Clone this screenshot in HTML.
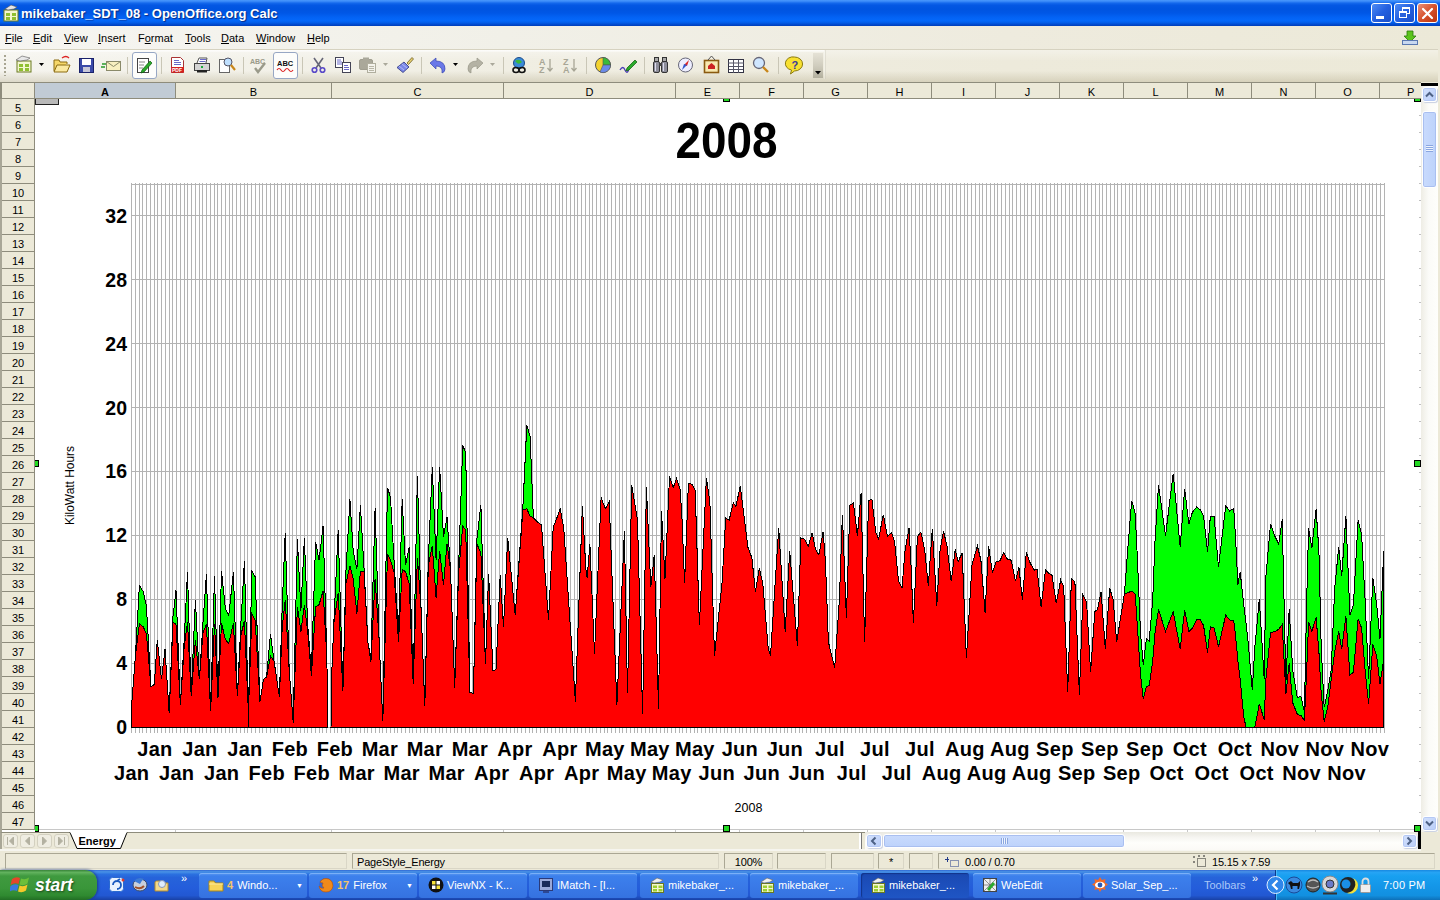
<!DOCTYPE html><html><head><meta charset="utf-8"><title>mikebaker_SDT_08 - OpenOffice.org Calc</title><style>
*{box-sizing:border-box;margin:0;padding:0}
html,body{width:1440px;height:900px;overflow:hidden;background:#ece9d8;font-family:"Liberation Sans",sans-serif;font-size:11px;color:#000}
.abs{position:absolute}
#title{left:0;top:0;width:1440px;height:26px;background:linear-gradient(to bottom,#4a98fc 0%,#3a8af8 5%,#1468ec 12%,#0457e3 20%,#0054e0 35%,#0057e6 50%,#0362f4 66%,#0468fa 80%,#035ce6 88%,#0148cc 95%,#003eb8 100%)}
#title .t{left:21px;top:6px;color:#fff;font-weight:bold;font-size:13px;white-space:nowrap;text-shadow:1px 1px 1px #0a2a80;letter-spacing:0px}
.wb{top:3px;width:21px;height:20px;border:1px solid #fff;border-radius:3px;background:linear-gradient(135deg,#4f8cf5 0%,#2460e0 50%,#1a4fc8 100%)}
#menu{left:0;top:26px;width:1440px;height:24px;background:linear-gradient(to right,#f6f5f1 0%,#f1f0e8 35%,#eeebde 70%,#ece9d8 100%);border-bottom:1px solid #d6d2c0}
#menu span{position:absolute;top:6px;white-space:nowrap;font-size:11px}
#menu u{text-decoration:underline}
#tb{left:0;top:50px;width:1440px;height:32px;background:linear-gradient(to bottom,rgba(255,255,255,.35) 0%,rgba(255,255,255,0) 35%,rgba(170,160,125,0) 65%,rgba(170,160,125,.33) 100%),linear-gradient(to right,#f5f4ee 0%,#f0eee3 35%,#edeadb 70%,#ece9d8 100%)}
.sep{position:absolute;top:57px;width:1px;height:17px;background:#c9c6b6}
.box{position:absolute;top:52px;height:27px;border:1px solid #97a7c4;border-radius:3px;background:#fdfdfb}
#colh{left:0;top:82px;width:1421px;height:17px;background:#ece9d8;border-top:1px solid #8e8c7c;border-bottom:1px solid #8e8c7c}
.ch{position:absolute;top:0;height:15px;border-right:1px solid #8e8c7c;text-align:center;font-size:11px;line-height:15px;padding-top:2px;overflow:hidden;height:15px}
#rowh{left:0;top:99px;width:35px;height:731px;background:#ece9d8;border-left:2px solid #a9a797;border-right:1px solid #8e8c7c}
.rh{position:absolute;left:0;width:32px;height:17px;border-bottom:1px solid #8e8c7c;text-align:center;font-size:11px;line-height:17px;padding-top:1px}
#sheet{left:35px;top:99px;width:1386px;height:731px;background:#fff}
</style></head><body>
<div id="title" class="abs">
<svg class="abs" style="left:2px;top:4px" width="18" height="18" viewBox="0 0 18 18"><rect x="2" y="6" width="14" height="11" fill="#f4f6d0" stroke="#6a7a20"/><rect x="4" y="9" width="4" height="3" fill="#8fbf30"/><rect x="10" y="9" width="4" height="3" fill="#8fbf30"/><rect x="4" y="13" width="4" height="3" fill="#8fbf30"/><rect x="10" y="13" width="4" height="3" fill="#8fbf30"/><path d="M3 5 L9 1 L15 3 L12 5 L6 6 Z" fill="#e8e8e8" stroke="#555" stroke-width=".6"/></svg>
<div class="abs t" id="ttxt">mikebaker_SDT_08 - OpenOffice.org Calc</div>
<div class="abs wb" style="left:1371px"><div class="abs" style="left:4px;top:12px;width:8px;height:3px;background:#fff"></div></div>
<div class="abs wb" style="left:1394px"><div class="abs" style="left:7px;top:3px;width:8px;height:7px;border:1px solid #fff;border-top-width:2px"></div><div class="abs" style="left:4px;top:7px;width:8px;height:7px;border:1px solid #fff;border-top-width:2px;background:#2a62dc"></div></div>
<div class="abs wb" style="left:1417px;background:linear-gradient(135deg,#e8907a 0%,#d7512b 50%,#b8340f 100%)"><svg class="abs" style="left:3px;top:3px" width="13" height="13" viewBox="0 0 13 13"><path d="M2 2 L11 11 M11 2 L2 11" stroke="#fff" stroke-width="2.2" stroke-linecap="round"/></svg></div>
</div>
<div id="menu" class="abs">
<span style="left:5px"><u>F</u>ile</span>
<span style="left:33px"><u>E</u>dit</span>
<span style="left:64px"><u>V</u>iew</span>
<span style="left:98px"><u>I</u>nsert</span>
<span style="left:138px">F<u>o</u>rmat</span>
<span style="left:185px"><u>T</u>ools</span>
<span style="left:221px"><u>D</u>ata</span>
<span style="left:256px"><u>W</u>indow</span>
<span style="left:307px"><u>H</u>elp</span>
<svg class="abs" style="left:1401px;top:4px" width="18" height="16" viewBox="0 0 18 16"><path d="M6 1 h6 v5 h3 l-6 6 l-6 -6 h3 z" fill="#5cc41c" stroke="#2a7a0a" stroke-width=".8"/><rect x="1.5" y="10.5" width="15" height="4" fill="#c8d8f0" stroke="#5a78b0"/></svg>
</div>
<div id="tb" class="abs"></div>
<div class="sep" style="left:127px"></div>
<div class="sep" style="left:161px"></div>
<div class="sep" style="left:243px"></div>
<div class="sep" style="left:302px"></div>
<div class="sep" style="left:421px"></div>
<div class="sep" style="left:503px"></div>
<div class="sep" style="left:586px"></div>
<div class="sep" style="left:644px"></div>
<div class="sep" style="left:778px"></div>
<div class="box" style="left:132px;width:25px"></div>
<div class="box" style="left:273px;width:25px"></div>
<div class="abs" style="left:4px;top:55px;width:2px;height:21px;background:repeating-linear-gradient(to bottom,#a8a592 0 2px,transparent 2px 4px)"></div>
<svg class="abs" style="left:0;top:0" width="1440" height="82" viewBox="0 0 1440 82"><rect x="17" y="61" width="14" height="11" fill="#f4f6d0" stroke="#6a7a20"/><rect x="19" y="64" width="4" height="3" fill="#8fbf30"/><rect x="25" y="64" width="4" height="3" fill="#8fbf30"/><rect x="19" y="68" width="4" height="3" fill="#8fbf30"/><rect x="25" y="68" width="4" height="3" fill="#8fbf30"/><path d="M16 60 L22 56 L30 58 L27 60 L20 61 Z" fill="#e8e8e8" stroke="#555" stroke-width=".6"/><path d="M39 63 h5 l-2.5 3 z" fill="#000"/><path d="M54 71 V60 h5 l1 2 h7 v2" fill="#f6d76a" stroke="#8a6a10"/><path d="M54 72 l3 -7 h13 l-3 7 z" fill="#fbe9a0" stroke="#8a6a10"/><path d="M62 58 q4 -3 7 0" fill="none" stroke="#d22" stroke-width="1.3"/><rect x="79.500" y="58.500" width="14" height="14" fill="#3a4aa8" stroke="#1a226a"/><rect x="82" y="59" width="9" height="6" fill="#fff"/><rect x="83" y="67" width="7" height="5" fill="#c8c8d8"/><rect x="106.500" y="61.500" width="14" height="9" fill="#f8f0c0" stroke="#8a8a6a"/><path d="M106.500 61.500 l7 5 l7 -5" fill="none" stroke="#8a8a6a"/><path d="M102 64 h4 M101 67 h4" stroke="#2a9a2a" stroke-width="1.4"/><rect x="137.500" y="58.500" width="11" height="14" fill="#fff" stroke="#444"/><path d="M139 62 h6 M139 65 h5 M139 68 h4" stroke="#888"/><path d="M142 70 l8 -9 l2 2 l-8 9 l-3 1 z" fill="#2aaa2a" stroke="#0a5a0a" stroke-width=".7"/><path d="M171.500 57.500 h9 l3 3 v12 h-12z" fill="#fff" stroke="#a33"/><path d="M174 60.500 h5 M174 62.500 h7 M174 64.500 h7" stroke="#6a6ac8"/><rect x="171" y="67" width="13" height="5.500" fill="#d42020"/><text x="172" y="71.800" font-size="5" font-weight="bold" font-family="'Liberation Sans'" fill="#fff">PDF</text><path d="M197 63 l2 -5 h8 l-1 5" fill="#fff" stroke="#555"/><rect x="194.500" y="63.500" width="15" height="7" fill="#d4d4d4" stroke="#444"/><rect x="197" y="70" width="10" height="2.500" fill="#222"/><rect x="201" y="66" width="2" height="2" fill="#1aaa3a"/><path d="M200 59.500 h6 M199.500 61.500 h6" stroke="#6a6ac8"/><rect x="219.500" y="59.500" width="10" height="13" fill="#fff" stroke="#666"/><circle cx="228" cy="62" r="4" fill="#bfe0ff" stroke="#556"/><path d="M231 65 l4 5" stroke="#c8861a" stroke-width="2.2"/><text x="250" y="64" font-size="7" font-family='Liberation Sans' font-weight="bold" fill="#9a9a8a">ABC</text><path d="M255 68 l3 4 l7 -9" fill="none" stroke="#9a9a8a" stroke-width="2.4"/><text x="277" y="66" font-size="7.5" font-family='Liberation Sans' font-weight="bold" fill="#111">ABC</text><path d="M277 70 q2 -3 4 0 t4 0 t4 0 t4 0" fill="none" stroke="#d22" stroke-width="1.2"/><path d="M314 58 l7 10 M323 58 l-7 10" stroke="#667" stroke-width="1.6"/><circle cx="314.500" cy="70" r="2.3" fill="none" stroke="#5a4ac8" stroke-width="1.6"/><circle cx="322.500" cy="70" r="2.3" fill="none" stroke="#5a4ac8" stroke-width="1.6"/><rect x="335.500" y="57.500" width="8" height="10" fill="#fff" stroke="#445"/><path d="M337 60 h4 M337 62 h5 M337 64 h5" stroke="#6a6ac8"/><rect x="342.500" y="62.500" width="8" height="10" fill="#fff" stroke="#445"/><path d="M344 65.500 h4 M344 67.500 h5 M344 69.500 h5" stroke="#6a6ac8"/><rect x="359.500" y="59.500" width="13" height="10" rx="1.500" fill="#aaa89a" stroke="#a09e90"/><rect x="363" y="57.500" width="6" height="3" fill="#aaa89a"/><rect x="367.500" y="63.500" width="8" height="9" fill="#f4f3ec" stroke="#b0ae9e"/><path d="M369 66.500 h5 M369 68.500 h5 M369 70.500 h5" stroke="#b8b6a6"/><path d="M383 63 h5 l-2.5 3 z" fill="#aaa89a"/><path d="M412 57.500 l1.500 1.500 l-5 5.500 l-1.500 -1.500 z" fill="#e8d070" stroke="#5a4a10" stroke-width=".7"/><path d="M404 62 l5 5 l-6 5.500 l-6 -5 z" fill="#7a86e8" stroke="#2a327a" stroke-width=".8"/><path d="M399 66 l5 4 M402 64 l5 4" stroke="#c0c8f8" stroke-width=".8"/><path d="M430 63 l6 -5 v3 q9 0 9 8 q0 3 -3 4 q1 -7 -6 -7 v3 z" fill="#6a78e8" stroke="#3a48b0" stroke-width=".7"/><path d="M453 63 h5 l-2.5 3 z" fill="#000"/><path d="M483 63 l-6 -5 v3 q-9 0 -9 8 q0 3 3 4 q-1 -7 6 -7 v3 z" fill="#b4b2a4" stroke="#9a988a" stroke-width=".7"/><path d="M490 63 h5 l-2.5 3 z" fill="#aaa89a"/><circle cx="519" cy="63" r="5.500" fill="#3a8ad8" stroke="#1a4a8a"/><path d="M515 61 q4 -3 7 1 q-3 3 -5 1z" fill="#3aba3a"/><path d="M513 70 a3 2.500 0 1 0 6 0 a3 2.500 0 1 0 -6 0 M519 70 a3 2.500 0 1 0 6 0 a3 2.500 0 1 0 -6 0" fill="none" stroke="#111" stroke-width="1.6"/><text x="539" y="65" font-size="9" font-weight="bold" font-family='Liberation Sans' fill="#a8a696">A</text><text x="539" y="73" font-size="9" font-weight="bold" font-family='Liberation Sans' fill="#a8a696">Z</text><path d="M550 59 v12 m-2.500 -3 l2.500 3 l2.500 -3" stroke="#a8a696" stroke-width="1.3" fill="none"/><text x="563" y="65" font-size="9" font-weight="bold" font-family='Liberation Sans' fill="#a8a696">Z</text><text x="563" y="73" font-size="9" font-weight="bold" font-family='Liberation Sans' fill="#a8a696">A</text><path d="M574 59 v12 m-2.500 -3 l2.500 3 l2.500 -3" stroke="#a8a696" stroke-width="1.3" fill="none"/><circle cx="603" cy="65" r="7.500" fill="#f2d230" stroke="#555"/><path d="M603 65 L603 57.500 A7.500 7.500 0 0 1 610.500 65 Z" fill="#3aba3a" stroke="#555" stroke-width=".6"/><path d="M603 65 L610.500 65 A7.500 7.500 0 0 1 600 72 Z" fill="#6a8ae8" stroke="#555" stroke-width=".6"/><path d="M620 70 q3 -5 5 0 t4 -1" fill="none" stroke="#4a3ab8" stroke-width="1.3"/><path d="M627 68 l8 -8 l2 2 l-8 8 l-3 1 z" fill="#2aaa2a" stroke="#0a5a0a" stroke-width=".7"/><rect x="653.500" y="61.500" width="6" height="11" rx="1.500" fill="#8e8e9a" stroke="#333"/><rect x="661.500" y="61.500" width="6" height="11" rx="1.500" fill="#8e8e9a" stroke="#333"/><rect x="654.500" y="57.500" width="4" height="4" fill="#aaa" stroke="#333"/><rect x="662.500" y="57.500" width="4" height="4" fill="#aaa" stroke="#333"/><rect x="659" y="63" width="3" height="3" fill="#444"/><path d="M655.500 63 v8 M663.500 63 v8" stroke="#dde"/><circle cx="685.500" cy="65" r="7" fill="#eef" stroke="#667"/><path d="M689 60 l-2 6 l-3 -1 z" fill="#d22"/><path d="M682 70 l2 -6 l3 1 z" fill="#35c"/><rect x="704.500" y="60.500" width="14" height="12" fill="#f8e8b0" stroke="#8a5a10" stroke-width="1.6"/><path d="M708 69 v-3 l3.500 -3 l3.500 3 v3 z" fill="#c22"/><path d="M708 60 l3.500 -4 l3.500 4" fill="none" stroke="#555"/><rect x="728.500" y="59.500" width="15" height="13" fill="#fff" stroke="#334"/><path d="M728 63 h16 M733.500 60 v13 M738.500 60 v13 M729 66.500 h14 M729 69.500 h14" stroke="#556"/><circle cx="759" cy="63" r="5.500" fill="#cfe6ff" stroke="#667" stroke-width="1.3"/><path d="M763 67 l5 5" stroke="#c8861a" stroke-width="2.4"/><path d="M794.500 57 a7.500 6.500 0 1 1 0 14 l-4 3 l1 -4 a7.500 6.500 0 0 1 3 -13z" fill="#f8e030" stroke="#8a7a10"/><text x="791.500" y="69" font-size="11" font-weight="bold" font-family='Liberation Sans' fill="#3a3a9a">?</text></svg>
<div class="abs" style="left:0;top:50px;width:824px;height:2px;background:linear-gradient(to bottom,rgba(255,255,255,.85),rgba(255,255,255,.3))"></div>
<div class="abs" style="left:824px;top:50px;width:1px;height:29px;background:rgba(255,255,255,.25);border-right:1px solid rgba(150,145,120,.2);width:2px"></div>
<div class="abs" style="left:813px;top:53px;width:10px;height:25px;background:linear-gradient(to bottom,#e5e2d6 0%,#d0cdbe 50%,#b3b09e 100%)"></div>
<svg class="abs" style="left:813px;top:69px" width="10" height="8"><path d="M2 2 h6 l-3 3.500 z" fill="#000"/></svg>
<div id="colh" class="abs">
<div class="ch" style="left:0;width:35px;border-left:2px solid #8e8c7c"></div>
<div class="ch" style="left:35px;width:141px;background:#c1cbd5;font-weight:bold;">A</div>
<div class="ch" style="left:176px;width:156px;">B</div>
<div class="ch" style="left:332px;width:172px;">C</div>
<div class="ch" style="left:504px;width:172px;">D</div>
<div class="ch" style="left:676px;width:64px;">E</div>
<div class="ch" style="left:740px;width:64px;">F</div>
<div class="ch" style="left:804px;width:64px;">G</div>
<div class="ch" style="left:868px;width:64px;">H</div>
<div class="ch" style="left:932px;width:64px;">I</div>
<div class="ch" style="left:996px;width:64px;">J</div>
<div class="ch" style="left:1060px;width:64px;">K</div>
<div class="ch" style="left:1124px;width:64px;">L</div>
<div class="ch" style="left:1188px;width:64px;">M</div>
<div class="ch" style="left:1252px;width:64px;">N</div>
<div class="ch" style="left:1316px;width:64px;">O</div>
<div class="ch" style="left:1380px;width:41px;border-right:none;text-align:left;padding-left:27px;">P</div>
</div>
<div id="rowh" class="abs">
<div class="rh" style="top:0px">5</div>
<div class="rh" style="top:17px">6</div>
<div class="rh" style="top:34px">7</div>
<div class="rh" style="top:51px">8</div>
<div class="rh" style="top:68px">9</div>
<div class="rh" style="top:85px">10</div>
<div class="rh" style="top:102px">11</div>
<div class="rh" style="top:119px">12</div>
<div class="rh" style="top:136px">13</div>
<div class="rh" style="top:153px">14</div>
<div class="rh" style="top:170px">15</div>
<div class="rh" style="top:187px">16</div>
<div class="rh" style="top:204px">17</div>
<div class="rh" style="top:221px">18</div>
<div class="rh" style="top:238px">19</div>
<div class="rh" style="top:255px">20</div>
<div class="rh" style="top:272px">21</div>
<div class="rh" style="top:289px">22</div>
<div class="rh" style="top:306px">23</div>
<div class="rh" style="top:323px">24</div>
<div class="rh" style="top:340px">25</div>
<div class="rh" style="top:357px">26</div>
<div class="rh" style="top:374px">27</div>
<div class="rh" style="top:391px">28</div>
<div class="rh" style="top:408px">29</div>
<div class="rh" style="top:425px">30</div>
<div class="rh" style="top:442px">31</div>
<div class="rh" style="top:459px">32</div>
<div class="rh" style="top:476px">33</div>
<div class="rh" style="top:493px">34</div>
<div class="rh" style="top:510px">35</div>
<div class="rh" style="top:527px">36</div>
<div class="rh" style="top:544px">37</div>
<div class="rh" style="top:561px">38</div>
<div class="rh" style="top:578px">39</div>
<div class="rh" style="top:595px">40</div>
<div class="rh" style="top:612px">41</div>
<div class="rh" style="top:629px">42</div>
<div class="rh" style="top:646px">43</div>
<div class="rh" style="top:663px">44</div>
<div class="rh" style="top:680px">45</div>
<div class="rh" style="top:697px">46</div>
<div class="rh" style="top:714px">47</div>
</div>
<div id="sheet" class="abs"></div>
<svg class="abs" style="left:0;top:0" width="1440" height="900" viewBox="0 0 1440 900" font-family="'Liberation Sans',sans-serif"><path d="M131.5 183V733M135.5 183V733M139.5 183V733M142.5 183V733M146.5 183V733M150.5 183V733M154.5 183V733M157.5 183V733M161.5 183V733M165.5 183V733M169.5 183V733M172.5 183V733M176.5 183V733M180.5 183V733M184.5 183V733M187.5 183V733M191.5 183V733M195.5 183V733M199.5 183V733M202.5 183V733M206.5 183V733M210.5 183V733M214.5 183V733M217.5 183V733M221.5 183V733M225.5 183V733M229.5 183V733M232.5 183V733M236.5 183V733M240.5 183V733M244.5 183V733M247.5 183V733M251.5 183V733M255.5 183V733M259.5 183V733M262.5 183V733M266.5 183V733M270.5 183V733M274.5 183V733M277.5 183V733M281.5 183V733M285.5 183V733M289.5 183V733M292.5 183V733M296.5 183V733M300.5 183V733M304.5 183V733M307.5 183V733M311.5 183V733M315.5 183V733M319.5 183V733M322.5 183V733M326.5 183V733M330.5 183V733M334.5 183V733M337.5 183V733M341.5 183V733M345.5 183V733M349.5 183V733M352.5 183V733M356.5 183V733M360.5 183V733M364.5 183V733M367.5 183V733M371.5 183V733M375.5 183V733M379.5 183V733M382.5 183V733M386.5 183V733M390.5 183V733M394.5 183V733M397.5 183V733M401.5 183V733M405.5 183V733M409.5 183V733M412.5 183V733M416.5 183V733M420.5 183V733M424.5 183V733M427.5 183V733M431.5 183V733M435.5 183V733M439.5 183V733M442.5 183V733M446.5 183V733M450.5 183V733M454.5 183V733M457.5 183V733M461.5 183V733M465.5 183V733M469.5 183V733M472.5 183V733M476.5 183V733M480.5 183V733M484.5 183V733M487.5 183V733M491.5 183V733M495.5 183V733M499.5 183V733M502.5 183V733M506.5 183V733M510.5 183V733M514.5 183V733M517.5 183V733M521.5 183V733M525.5 183V733M529.5 183V733M532.5 183V733M536.5 183V733M540.5 183V733M544.5 183V733M547.5 183V733M551.5 183V733M555.5 183V733M559.5 183V733M562.5 183V733M566.5 183V733M570.5 183V733M574.5 183V733M577.5 183V733M581.5 183V733M585.5 183V733M589.5 183V733M592.5 183V733M596.5 183V733M600.5 183V733M604.5 183V733M607.5 183V733M611.5 183V733M615.5 183V733M619.5 183V733M622.5 183V733M626.5 183V733M630.5 183V733M634.5 183V733M637.5 183V733M641.5 183V733M645.5 183V733M649.5 183V733M652.5 183V733M656.5 183V733M660.5 183V733M664.5 183V733M667.5 183V733M671.5 183V733M675.5 183V733M679.5 183V733M682.5 183V733M686.5 183V733M690.5 183V733M694.5 183V733M697.5 183V733M701.5 183V733M705.5 183V733M709.5 183V733M712.5 183V733M716.5 183V733M720.5 183V733M724.5 183V733M727.5 183V733M731.5 183V733M735.5 183V733M739.5 183V733M742.5 183V733M746.5 183V733M750.5 183V733M754.5 183V733M757.5 183V733M761.5 183V733M765.5 183V733M769.5 183V733M772.5 183V733M776.5 183V733M780.5 183V733M784.5 183V733M787.5 183V733M791.5 183V733M795.5 183V733M799.5 183V733M802.5 183V733M806.5 183V733M810.5 183V733M814.5 183V733M817.5 183V733M821.5 183V733M825.5 183V733M829.5 183V733M832.5 183V733M836.5 183V733M840.5 183V733M844.5 183V733M847.5 183V733M851.5 183V733M855.5 183V733M859.5 183V733M862.5 183V733M866.5 183V733M870.5 183V733M874.5 183V733M877.5 183V733M881.5 183V733M885.5 183V733M889.5 183V733M892.5 183V733M896.5 183V733M900.5 183V733M904.5 183V733M907.5 183V733M911.5 183V733M915.5 183V733M919.5 183V733M922.5 183V733M926.5 183V733M930.5 183V733M934.5 183V733M937.5 183V733M941.5 183V733M945.5 183V733M949.5 183V733M952.5 183V733M956.5 183V733M960.5 183V733M964.5 183V733M967.5 183V733M971.5 183V733M975.5 183V733M979.5 183V733M982.5 183V733M986.5 183V733M990.5 183V733M994.5 183V733M997.5 183V733M1001.5 183V733M1005.5 183V733M1009.5 183V733M1012.5 183V733M1016.5 183V733M1020.5 183V733M1024.5 183V733M1027.5 183V733M1031.5 183V733M1035.5 183V733M1039.5 183V733M1042.5 183V733M1046.5 183V733M1050.5 183V733M1054.5 183V733M1057.5 183V733M1061.5 183V733M1065.5 183V733M1069.5 183V733M1072.5 183V733M1076.5 183V733M1080.5 183V733M1084.5 183V733M1087.5 183V733M1091.5 183V733M1095.5 183V733M1099.5 183V733M1102.5 183V733M1106.5 183V733M1110.5 183V733M1114.5 183V733M1117.5 183V733M1121.5 183V733M1125.5 183V733M1129.5 183V733M1132.5 183V733M1136.5 183V733M1140.5 183V733M1144.5 183V733M1147.5 183V733M1151.5 183V733M1155.5 183V733M1159.5 183V733M1162.5 183V733M1166.5 183V733M1170.5 183V733M1174.5 183V733M1177.5 183V733M1181.5 183V733M1185.5 183V733M1189.5 183V733M1192.5 183V733M1196.5 183V733M1200.5 183V733M1204.5 183V733M1207.5 183V733M1211.5 183V733M1215.5 183V733M1219.5 183V733M1222.5 183V733M1226.5 183V733M1230.5 183V733M1234.5 183V733M1237.5 183V733M1241.5 183V733M1245.5 183V733M1249.5 183V733M1252.5 183V733M1256.5 183V733M1260.5 183V733M1264.5 183V733M1267.5 183V733M1271.5 183V733M1275.5 183V733M1279.5 183V733M1282.5 183V733M1286.5 183V733M1290.5 183V733M1294.5 183V733M1297.5 183V733M1301.5 183V733M1305.5 183V733M1309.5 183V733M1312.5 183V733M1316.5 183V733M1320.5 183V733M1324.5 183V733M1327.5 183V733M1331.5 183V733M1335.5 183V733M1339.5 183V733M1342.5 183V733M1346.5 183V733M1350.5 183V733M1354.5 183V733M1357.5 183V733M1361.5 183V733M1365.5 183V733M1369.5 183V733M1372.5 183V733M1376.5 183V733M1380.5 183V733M1384.5 183V733" stroke="#b3b3b3" stroke-width="1" fill="none" shape-rendering="crispEdges"/><path d="M131 727.5H1384.500M131 663.5H1384.500M131 599.5H1384.500M131 535.5H1384.500M131 471.5H1384.500M131 407.5H1384.500M131 343.5H1384.500M131 279.5H1384.500M131 215.5H1384.500M131 184.500H1384.500" stroke="#b3b3b3" stroke-width="1" fill="none" shape-rendering="crispEdges"/><g shape-rendering="crispEdges"><path d="M131.7 727 L131.7 703.9 L135.4 656.0 L139.4 585.3 L143.3 591.8 L146.4 605.9 L151.0 686.8 L154.3 684.5 L157.3 640.2 L161.5 679.4 L165.0 649.0 L169.2 713.2 L173.0 616.4 L176.0 590.2 L180.4 705.0 L184.2 639.7 L187.5 572.0 L191.2 695.7 L195.4 600.0 L199.4 679.4 L202.9 623.4 L206.4 574.3 L210.6 710.9 L214.5 576.0 L218.0 698.0 L221.5 571.3 L225.5 609.4 L228.8 615.2 L233.4 572.2 L237.4 695.7 L240.9 623.4 L244.4 561.3 L248.4 712.0 L251.9 571.3 L255.1 576.7 L260.0 701.5 L263.5 679.4 L266.6 677.0 L270.5 633.9 L274.0 660.7 L279.4 696.9 L282.2 607.0 L285.2 533.3 L289.2 670.0 L293.2 722.5 L297.4 539.1 L300.9 610.5 L304.4 538.4 L307.6 623.4 L311.4 671.2 L315.6 541.9 L319.1 560.3 L323.1 525.6 L326.8 656.0 L328.0 727.0 L328.0 727 Z" fill="#00ff00" stroke="#000" stroke-width="1" stroke-linejoin="miter"/>
<path d="M131.7 727 L131.7 703.9 L135.4 656.0 L139.4 623.4 L143.3 626.9 L146.4 633.9 L151.0 686.8 L154.3 684.5 L157.3 640.2 L161.5 679.4 L165.0 649.0 L169.2 713.2 L173.0 622.2 L176.0 624.5 L180.4 705.0 L184.2 646.7 L187.5 622.2 L191.2 695.7 L195.4 639.7 L199.4 679.4 L202.9 632.7 L206.4 624.5 L210.6 710.9 L214.5 624.5 L218.0 698.0 L221.5 623.4 L225.5 639.7 L228.8 643.2 L233.4 623.4 L237.4 695.7 L240.9 635.0 L244.4 621.0 L248.4 712.0 L251.9 614.0 L255.1 619.9 L260.0 701.5 L263.5 679.4 L266.6 677.0 L270.5 656.0 L274.0 660.7 L279.4 696.9 L282.2 628.0 L285.2 600.0 L289.2 670.0 L293.2 722.5 L297.4 607.0 L300.9 631.5 L304.4 604.7 L307.6 630.4 L311.4 675.9 L315.6 607.0 L319.1 604.7 L323.1 590.7 L326.8 656.0 L328.0 727.0 L328.0 727 Z" fill="#ff0000" stroke="#000" stroke-width="1" stroke-linejoin="miter"/>
<path d="M331.0 727 L331.0 727.0 L331.9 670.0 L333.8 623.4 L338.2 530.2 L342.9 691.0 L345.9 572.0 L349.9 499.4 L353.2 551.0 L356.9 569.4 L360.4 505.3 L364.1 569.4 L367.9 642.0 L370.9 657.2 L375.1 507.6 L379.1 639.7 L382.8 721.4 L387.5 487.8 L390.5 497.1 L394.0 560.1 L398.5 632.7 L402.2 499.4 L405.5 565.0 L409.2 547.3 L413.2 684.0 L417.4 475.6 L421.1 609.4 L424.8 706.2 L428.3 560.1 L432.3 467.5 L436.1 560.3 L439.6 466.8 L443.5 537.0 L447.0 516.9 L450.5 569.4 L454.7 687.5 L458.7 565.0 L462.7 445.3 L465.7 452.7 L469.9 692.2 L473.4 693.4 L476.9 539.3 L480.9 504.6 L485.5 664.2 L488.6 574.1 L493.0 671.2 L496.0 669.6 L500.2 575.3 L503.5 626.9 L507.7 537.9 L515.2 615.2 L522.9 506.7 L526.8 425.2 L530.1 436.6 L533.4 518.1 L537.1 521.6 L541.5 525.1 L548.5 619.9 L553.2 527.4 L556.7 518.3 L560.2 508.8 L563.7 527.7 L575.4 701.5 L582.4 506.0 L585.9 569.4 L587.1 577.8 L589.9 543.8 L594.5 653.7 L601.1 497.6 L605.3 508.8 L609.2 501.8 L616.9 705.0 L624.4 530.9 L627.5 693.4 L631.7 485.0 L637.5 520.4 L642.6 714.4 L646.4 486.6 L649.2 550.8 L650.8 586.9 L654.3 554.7 L658.5 708.5 L661.5 510.6 L665.0 578.8 L669.5 476.6 L673.2 487.8 L676.5 478.4 L680.0 488.9 L681.8 513.4 L684.6 583.4 L688.4 483.1 L691.9 484.3 L695.2 490.1 L699.4 624.5 L706.4 478.4 L709.9 501.8 L714.5 656.0 L722.0 583.4 L725.7 518.1 L729.2 520.0 L733.2 502.9 L736.0 506.4 L740.2 485.9 L743.7 513.4 L747.9 547.3 L751.9 557.8 L755.4 591.6 L759.3 568.3 L762.8 583.4 L768.2 647.9 L770.5 656.0 L778.7 527.9 L785.2 631.5 L789.7 550.8 L797.4 646.2 L800.9 537.9 L804.4 539.1 L808.3 546.1 L812.1 532.8 L815.6 549.6 L818.9 555.0 L823.1 531.6 L825.4 560.3 L828.4 642.0 L834.7 667.7 L839.4 600.0 L842.4 514.6 L846.4 617.5 L849.9 505.3 L853.4 502.9 L857.4 535.6 L861.1 492.9 L864.6 641.6 L868.6 500.6 L871.9 499.4 L875.8 532.1 L878.6 539.1 L883.3 514.6 L887.5 536.8 L891.5 532.8 L894.5 541.4 L898.5 581.1 L902.0 588.1 L905.0 550.8 L909.0 527.9 L910.8 560.1 L913.4 623.4 L917.4 536.8 L920.9 532.1 L924.8 550.8 L928.3 585.8 L932.3 528.6 L936.8 605.6 L940.0 550.8 L943.5 530.9 L947.0 546.1 L951.2 581.1 L955.2 549.6 L958.2 561.3 L962.2 553.1 L966.4 658.4 L972.0 564.8 L977.4 546.1 L980.9 560.1 L985.1 612.6 L988.6 546.1 L992.5 572.9 L996.0 562.0 L1000.0 560.8 L1003.5 552.6 L1007.7 559.6 L1011.2 560.1 L1015.4 581.1 L1018.9 567.1 L1022.4 599.8 L1026.4 551.9 L1029.9 562.4 L1034.1 570.1 L1037.1 569.4 L1041.1 606.8 L1045.5 569.9 L1049.2 573.6 L1052.0 575.3 L1056.2 603.3 L1060.7 579.9 L1063.7 586.9 L1067.7 692.2 L1071.4 578.8 L1074.9 581.8 L1079.4 694.5 L1082.9 595.1 L1086.6 602.1 L1090.6 672.4 L1094.8 611.7 L1097.6 609.4 L1101.1 591.6 L1105.3 649.0 L1109.7 588.1 L1113.2 599.8 L1116.7 642.0 L1124.4 593.9 L1128.2 544.0 L1131.7 500.6 L1135.2 513.4 L1137.5 560.3 L1140.5 632.7 L1143.3 665.4 L1146.4 638.5 L1149.2 640.9 L1152.7 600.0 L1155.0 541.4 L1158.5 485.0 L1165.5 535.6 L1173.2 473.8 L1180.2 547.3 L1184.6 488.9 L1188.9 523.9 L1192.4 512.3 L1196.6 507.1 L1200.5 509.9 L1203.6 515.8 L1207.5 551.9 L1210.3 516.9 L1214.1 516.9 L1218.5 567.1 L1225.7 506.0 L1229.7 511.1 L1233.7 508.3 L1235.5 536.8 L1237.9 584.6 L1240.2 571.8 L1243.7 604.7 L1246.0 623.4 L1247.9 639.7 L1252.3 689.9 L1254.9 646.7 L1259.3 598.9 L1264.2 679.4 L1265.9 576.7 L1270.5 523.9 L1275.2 537.0 L1278.7 543.8 L1282.2 519.3 L1285.9 682.6 L1289.2 609.4 L1292.7 670.0 L1297.4 698.0 L1300.9 696.2 L1304.4 712.0 L1306.7 600.0 L1308.6 527.9 L1311.8 548.4 L1316.1 508.8 L1318.9 550.8 L1321.2 646.7 L1324.2 707.4 L1327.7 691.0 L1331.2 670.0 L1334.7 588.3 L1338.7 547.3 L1341.7 576.4 L1345.9 515.8 L1349.9 615.0 L1353.4 604.5 L1358.1 520.0 L1361.6 534.4 L1365.1 600.0 L1368.6 679.4 L1372.8 577.6 L1376.7 604.7 L1380.0 638.8 L1383.7 550.8 L1383.7 727 Z" fill="#00ff00" stroke="#000" stroke-width="1" stroke-linejoin="miter"/>
<path d="M331.0 727 L331.0 727.0 L331.9 670.0 L333.8 623.4 L338.2 593.0 L342.9 691.0 L345.9 583.7 L349.9 565.9 L353.2 579.0 L356.9 613.8 L360.4 571.8 L364.1 571.8 L367.9 642.0 L370.9 661.9 L375.1 578.8 L379.1 639.7 L382.8 721.4 L387.5 554.3 L390.5 560.3 L394.0 571.8 L398.5 642.0 L402.2 569.4 L405.5 571.8 L409.2 583.4 L413.2 684.0 L417.4 557.8 L421.1 609.4 L424.8 706.2 L428.3 565.0 L432.3 546.1 L436.1 597.7 L439.6 550.8 L443.5 584.8 L447.0 543.8 L450.5 569.4 L454.7 687.5 L458.7 571.8 L462.7 526.3 L465.7 529.8 L469.9 692.2 L473.4 693.4 L476.9 544.0 L480.9 553.3 L485.5 664.2 L488.6 574.1 L493.0 671.2 L496.0 669.6 L500.2 575.3 L503.5 626.9 L507.7 537.9 L515.2 615.2 L522.9 509.9 L526.8 508.8 L530.1 516.0 L533.4 518.1 L537.1 521.6 L541.5 525.1 L548.5 619.9 L553.2 527.4 L556.7 518.3 L560.2 508.8 L563.7 527.7 L575.4 701.5 L582.4 506.0 L585.9 569.4 L587.1 577.8 L589.9 543.8 L594.5 653.7 L601.1 497.6 L605.3 508.8 L609.2 501.8 L616.9 705.0 L624.4 530.9 L627.5 693.4 L631.7 485.0 L637.5 520.4 L642.6 714.4 L646.4 486.6 L649.2 550.8 L650.8 586.9 L654.3 554.7 L658.5 708.5 L661.5 510.6 L665.0 578.8 L669.5 476.6 L673.2 487.8 L676.5 478.4 L680.0 488.9 L681.8 513.4 L684.6 583.4 L688.4 483.1 L691.9 484.3 L695.2 490.1 L699.4 624.5 L706.4 478.4 L709.9 501.8 L714.5 656.0 L722.0 583.4 L725.7 518.1 L729.2 520.0 L733.2 502.9 L736.0 506.4 L740.2 485.9 L743.7 513.4 L747.9 547.3 L751.9 557.8 L755.4 591.6 L759.3 568.3 L762.8 583.4 L768.2 647.9 L770.5 656.0 L778.7 527.9 L785.2 631.5 L789.7 550.8 L797.4 646.2 L800.9 537.9 L804.4 539.1 L808.3 546.1 L812.1 532.8 L815.6 549.6 L818.9 555.0 L823.1 531.6 L825.4 560.3 L828.4 642.0 L834.7 667.7 L839.4 600.0 L842.4 514.6 L846.4 617.5 L849.9 505.3 L853.4 502.9 L857.4 535.6 L861.1 492.9 L864.6 641.6 L868.6 500.6 L871.9 499.4 L875.8 532.1 L878.6 539.1 L883.3 514.6 L887.5 536.8 L891.5 532.8 L894.5 541.4 L898.5 581.1 L902.0 588.1 L905.0 550.8 L909.0 527.9 L910.8 560.1 L913.4 623.4 L917.4 536.8 L920.9 532.1 L924.8 550.8 L928.3 585.8 L932.3 528.6 L936.8 605.6 L940.0 550.8 L943.5 530.9 L947.0 546.1 L951.2 581.1 L955.2 549.6 L958.2 561.3 L962.2 553.1 L966.4 658.4 L972.0 564.8 L977.4 546.1 L980.9 560.1 L985.1 612.6 L988.6 546.1 L992.5 572.9 L996.0 562.0 L1000.0 560.8 L1003.5 552.6 L1007.7 559.6 L1011.2 560.1 L1015.4 581.1 L1018.9 567.1 L1022.4 599.8 L1026.4 551.9 L1029.9 562.4 L1034.1 570.1 L1037.1 569.4 L1041.1 606.8 L1045.5 569.9 L1049.2 573.6 L1052.0 575.3 L1056.2 603.3 L1060.7 579.9 L1063.7 586.9 L1067.7 692.2 L1071.4 578.8 L1074.9 581.8 L1079.4 694.5 L1082.9 595.1 L1086.6 602.1 L1090.6 672.4 L1094.8 611.7 L1097.6 609.4 L1101.1 591.6 L1105.3 649.0 L1109.7 588.1 L1113.2 599.8 L1116.7 642.0 L1124.4 593.9 L1128.2 592.5 L1131.7 591.1 L1135.2 594.2 L1137.5 628.0 L1140.5 674.7 L1143.3 699.2 L1146.4 686.8 L1149.2 685.2 L1152.7 660.7 L1155.0 632.7 L1158.5 609.4 L1165.5 631.5 L1173.2 611.7 L1180.2 649.0 L1184.6 610.5 L1188.9 631.5 L1192.4 628.0 L1196.6 619.9 L1200.5 619.9 L1203.6 625.7 L1207.5 652.5 L1210.3 626.9 L1214.1 628.0 L1218.5 646.7 L1225.7 615.2 L1229.7 619.9 L1233.7 621.0 L1235.5 635.0 L1237.9 660.7 L1240.2 679.4 L1243.7 716.7 L1246.0 727.0 L1247.9 727.0 L1252.3 727.0 L1254.9 727.0 L1259.3 703.9 L1264.2 719.5 L1265.9 679.4 L1270.5 632.7 L1275.2 631.5 L1278.7 629.2 L1282.2 624.5 L1285.9 694.1 L1289.2 663.0 L1292.7 702.7 L1297.4 714.4 L1300.9 715.5 L1304.4 720.2 L1306.7 670.0 L1308.6 622.2 L1311.8 631.5 L1316.1 617.5 L1318.9 651.4 L1321.2 693.4 L1324.2 721.4 L1327.7 707.4 L1331.2 679.4 L1334.7 651.4 L1338.7 631.5 L1341.7 649.0 L1345.9 616.4 L1349.9 674.7 L1353.4 672.4 L1358.1 618.7 L1361.6 628.0 L1365.1 670.0 L1368.6 703.9 L1372.8 644.4 L1376.7 656.0 L1380.0 684.0 L1383.7 660.0 L1383.7 727 Z" fill="#ff0000" stroke="#000" stroke-width="1" stroke-linejoin="miter"/></g><path d="M248.500 705V727" stroke="#000" stroke-width="1"/><text transform="translate(127,733.8) scale(0.93,1)" font-size="21" font-weight="bold" text-anchor="end">0</text><text transform="translate(127,669.9) scale(0.93,1)" font-size="21" font-weight="bold" text-anchor="end">4</text><text transform="translate(127,606.1) scale(0.93,1)" font-size="21" font-weight="bold" text-anchor="end">8</text><text transform="translate(127,542.2) scale(0.93,1)" font-size="21" font-weight="bold" text-anchor="end">12</text><text transform="translate(127,478.4) scale(0.93,1)" font-size="21" font-weight="bold" text-anchor="end">16</text><text transform="translate(127,414.5) scale(0.93,1)" font-size="21" font-weight="bold" text-anchor="end">20</text><text transform="translate(127,350.7) scale(0.93,1)" font-size="21" font-weight="bold" text-anchor="end">24</text><text transform="translate(127,286.8) scale(0.93,1)" font-size="21" font-weight="bold" text-anchor="end">28</text><text transform="translate(127,223.0) scale(0.93,1)" font-size="21" font-weight="bold" text-anchor="end">32</text><text x="726.500" y="158" font-size="50.500" font-weight="bold" text-anchor="middle" textLength="102" lengthAdjust="spacingAndGlyphs">2008</text><text x="131.7" y="780.0" font-size="20" font-weight="bold" text-anchor="middle" letter-spacing="0.3">Jan</text><text x="154.9" y="755.5" font-size="20" font-weight="bold" text-anchor="middle" letter-spacing="0.3">Jan</text><text x="176.7" y="780.0" font-size="20" font-weight="bold" text-anchor="middle" letter-spacing="0.3">Jan</text><text x="199.9" y="755.5" font-size="20" font-weight="bold" text-anchor="middle" letter-spacing="0.3">Jan</text><text x="221.7" y="780.0" font-size="20" font-weight="bold" text-anchor="middle" letter-spacing="0.3">Jan</text><text x="244.9" y="755.5" font-size="20" font-weight="bold" text-anchor="middle" letter-spacing="0.3">Jan</text><text x="266.7" y="780.0" font-size="20" font-weight="bold" text-anchor="middle" letter-spacing="0.3">Feb</text><text x="289.9" y="755.5" font-size="20" font-weight="bold" text-anchor="middle" letter-spacing="0.3">Feb</text><text x="311.7" y="780.0" font-size="20" font-weight="bold" text-anchor="middle" letter-spacing="0.3">Feb</text><text x="334.9" y="755.5" font-size="20" font-weight="bold" text-anchor="middle" letter-spacing="0.3">Feb</text><text x="356.7" y="780.0" font-size="20" font-weight="bold" text-anchor="middle" letter-spacing="0.3">Mar</text><text x="379.9" y="755.5" font-size="20" font-weight="bold" text-anchor="middle" letter-spacing="0.3">Mar</text><text x="401.7" y="780.0" font-size="20" font-weight="bold" text-anchor="middle" letter-spacing="0.3">Mar</text><text x="424.9" y="755.5" font-size="20" font-weight="bold" text-anchor="middle" letter-spacing="0.3">Mar</text><text x="446.7" y="780.0" font-size="20" font-weight="bold" text-anchor="middle" letter-spacing="0.3">Mar</text><text x="469.9" y="755.5" font-size="20" font-weight="bold" text-anchor="middle" letter-spacing="0.3">Mar</text><text x="491.7" y="780.0" font-size="20" font-weight="bold" text-anchor="middle" letter-spacing="0.3">Apr</text><text x="514.9" y="755.5" font-size="20" font-weight="bold" text-anchor="middle" letter-spacing="0.3">Apr</text><text x="536.7" y="780.0" font-size="20" font-weight="bold" text-anchor="middle" letter-spacing="0.3">Apr</text><text x="559.9" y="755.5" font-size="20" font-weight="bold" text-anchor="middle" letter-spacing="0.3">Apr</text><text x="581.7" y="780.0" font-size="20" font-weight="bold" text-anchor="middle" letter-spacing="0.3">Apr</text><text x="604.9" y="755.5" font-size="20" font-weight="bold" text-anchor="middle" letter-spacing="0.3">May</text><text x="626.7" y="780.0" font-size="20" font-weight="bold" text-anchor="middle" letter-spacing="0.3">May</text><text x="649.9" y="755.5" font-size="20" font-weight="bold" text-anchor="middle" letter-spacing="0.3">May</text><text x="671.7" y="780.0" font-size="20" font-weight="bold" text-anchor="middle" letter-spacing="0.3">May</text><text x="694.9" y="755.5" font-size="20" font-weight="bold" text-anchor="middle" letter-spacing="0.3">May</text><text x="716.7" y="780.0" font-size="20" font-weight="bold" text-anchor="middle" letter-spacing="0.3">Jun</text><text x="739.9" y="755.5" font-size="20" font-weight="bold" text-anchor="middle" letter-spacing="0.3">Jun</text><text x="761.7" y="780.0" font-size="20" font-weight="bold" text-anchor="middle" letter-spacing="0.3">Jun</text><text x="784.9" y="755.5" font-size="20" font-weight="bold" text-anchor="middle" letter-spacing="0.3">Jun</text><text x="806.7" y="780.0" font-size="20" font-weight="bold" text-anchor="middle" letter-spacing="0.3">Jun</text><text x="829.9" y="755.5" font-size="20" font-weight="bold" text-anchor="middle" letter-spacing="0.3">Jul</text><text x="851.7" y="780.0" font-size="20" font-weight="bold" text-anchor="middle" letter-spacing="0.3">Jul</text><text x="874.9" y="755.5" font-size="20" font-weight="bold" text-anchor="middle" letter-spacing="0.3">Jul</text><text x="896.7" y="780.0" font-size="20" font-weight="bold" text-anchor="middle" letter-spacing="0.3">Jul</text><text x="919.9" y="755.5" font-size="20" font-weight="bold" text-anchor="middle" letter-spacing="0.3">Jul</text><text x="941.7" y="780.0" font-size="20" font-weight="bold" text-anchor="middle" letter-spacing="0.3">Aug</text><text x="964.9" y="755.5" font-size="20" font-weight="bold" text-anchor="middle" letter-spacing="0.3">Aug</text><text x="986.7" y="780.0" font-size="20" font-weight="bold" text-anchor="middle" letter-spacing="0.3">Aug</text><text x="1009.9" y="755.5" font-size="20" font-weight="bold" text-anchor="middle" letter-spacing="0.3">Aug</text><text x="1031.7" y="780.0" font-size="20" font-weight="bold" text-anchor="middle" letter-spacing="0.3">Aug</text><text x="1054.9" y="755.5" font-size="20" font-weight="bold" text-anchor="middle" letter-spacing="0.3">Sep</text><text x="1076.7" y="780.0" font-size="20" font-weight="bold" text-anchor="middle" letter-spacing="0.3">Sep</text><text x="1099.9" y="755.5" font-size="20" font-weight="bold" text-anchor="middle" letter-spacing="0.3">Sep</text><text x="1121.7" y="780.0" font-size="20" font-weight="bold" text-anchor="middle" letter-spacing="0.3">Sep</text><text x="1144.9" y="755.5" font-size="20" font-weight="bold" text-anchor="middle" letter-spacing="0.3">Sep</text><text x="1166.7" y="780.0" font-size="20" font-weight="bold" text-anchor="middle" letter-spacing="0.3">Oct</text><text x="1189.9" y="755.5" font-size="20" font-weight="bold" text-anchor="middle" letter-spacing="0.3">Oct</text><text x="1211.7" y="780.0" font-size="20" font-weight="bold" text-anchor="middle" letter-spacing="0.3">Oct</text><text x="1234.9" y="755.5" font-size="20" font-weight="bold" text-anchor="middle" letter-spacing="0.3">Oct</text><text x="1256.7" y="780.0" font-size="20" font-weight="bold" text-anchor="middle" letter-spacing="0.3">Oct</text><text x="1279.9" y="755.5" font-size="20" font-weight="bold" text-anchor="middle" letter-spacing="0.3">Nov</text><text x="1301.7" y="780.0" font-size="20" font-weight="bold" text-anchor="middle" letter-spacing="0.3">Nov</text><text x="1324.9" y="755.5" font-size="20" font-weight="bold" text-anchor="middle" letter-spacing="0.3">Nov</text><text x="1346.7" y="780.0" font-size="20" font-weight="bold" text-anchor="middle" letter-spacing="0.3">Nov</text><text x="1369.9" y="755.5" font-size="20" font-weight="bold" text-anchor="middle" letter-spacing="0.3">Nov</text><text x="748.500" y="812" font-size="12.500" text-anchor="middle">2008</text><text transform="translate(74.300,485.500) rotate(-90)" font-size="13" text-anchor="middle" textLength="79" lengthAdjust="spacingAndGlyphs">KiloWatt Hours</text></svg>
<div class="abs" style="left:35px;top:99px;width:24px;height:6px;background:#b9b9b9;border:1px solid #222;border-top:none"></div>
<div class="abs" style="left:1419px;top:99px;width:2px;height:731px;background:repeating-linear-gradient(to bottom,transparent 0 16px,#c0c0c0 16px 17px)"></div>
<div class="abs" style="left:1421px;top:83px;width:17px;height:749px;background:linear-gradient(to right,#eeede5,#fbfbf8 45%,#fefefb)"></div>
<div class="abs" style="left:1421px;top:83px;width:17px;height:3px;background:#000"></div>
<div class="abs" style="left:1422px;top:87px;width:15px;height:15px;border:1px solid #fff;border-radius:3px;background:linear-gradient(135deg,#d3e1fd,#b9cdf8);box-shadow:inset 0 0 0 1px #b4c8f4,1px 1px 1px #c8cfe0"><svg width="15" height="15" style="position:absolute;left:-1px;top:-1px"><path d="M4 9.500 l3.500 -3.500 l3.500 3.500" fill="none" stroke="#4d6185" stroke-width="2"/></svg></div>
<div class="abs" style="left:1422px;top:816px;width:15px;height:15px;border:1px solid #fff;border-radius:3px;background:linear-gradient(135deg,#d3e1fd,#b9cdf8);box-shadow:inset 0 0 0 1px #b4c8f4,1px 1px 1px #c8cfe0"><svg width="15" height="15" style="position:absolute;left:-1px;top:-1px"><path d="M4 5.500 l3.500 3.500 l3.500 -3.500" fill="none" stroke="#4d6185" stroke-width="2"/></svg></div>
<div class="abs" style="left:1422px;top:111px;width:15px;height:77px;border:1px solid #fff;border-radius:3px;background:linear-gradient(to right,#c9dbfd,#bdd2fb);box-shadow:inset 0 0 0 1px #a9bff0"><div class="abs" style="left:3px;top:33px;width:7px;height:7px;background:repeating-linear-gradient(to bottom,#8aa6e0 0 1px,#eef4fe 1px 2px)"></div></div>
<div class="abs" style="left:1438px;top:26px;width:2px;height:845px;background:#ece9d8"></div>
<div class="abs" style="left:0;top:830px;width:1421px;height:2px;background:#fff;border-left:2px solid #a9a797"></div>
<div class="abs" style="left:35px;top:829px;width:1386px;height:1px;background:#c8c8c8"></div>
<div class="abs" style="left:175px;top:829px;width:1px;height:3px;background:#c8c8c8"></div>
<div class="abs" style="left:331px;top:829px;width:1px;height:3px;background:#c8c8c8"></div>
<div class="abs" style="left:503px;top:829px;width:1px;height:3px;background:#c8c8c8"></div>
<div class="abs" style="left:675px;top:829px;width:1px;height:3px;background:#c8c8c8"></div>
<div class="abs" style="left:739px;top:829px;width:1px;height:3px;background:#c8c8c8"></div>
<div class="abs" style="left:803px;top:829px;width:1px;height:3px;background:#c8c8c8"></div>
<div class="abs" style="left:867px;top:829px;width:1px;height:3px;background:#c8c8c8"></div>
<div class="abs" style="left:931px;top:829px;width:1px;height:3px;background:#c8c8c8"></div>
<div class="abs" style="left:995px;top:829px;width:1px;height:3px;background:#c8c8c8"></div>
<div class="abs" style="left:1059px;top:829px;width:1px;height:3px;background:#c8c8c8"></div>
<div class="abs" style="left:1123px;top:829px;width:1px;height:3px;background:#c8c8c8"></div>
<div class="abs" style="left:1187px;top:829px;width:1px;height:3px;background:#c8c8c8"></div>
<div class="abs" style="left:1251px;top:829px;width:1px;height:3px;background:#c8c8c8"></div>
<div class="abs" style="left:1315px;top:829px;width:1px;height:3px;background:#c8c8c8"></div>
<div class="abs" style="left:1379px;top:829px;width:1px;height:3px;background:#c8c8c8"></div>
<div class="abs" style="left:0;top:832px;width:1421px;height:19px;background:#ece9d8;border-top:1px solid #8e8c7c;border-left:2px solid #a9a797"></div>
<div class="abs" style="left:0;top:849px;width:1440px;height:2px;background:#f6f5ef"></div>
<div class="abs" style="left:3px;top:834px;width:15px;height:14px;border:1px solid #d3d0c0;border-radius:3px;background:#efede2"><svg width="15" height="14" style="position:absolute;left:-1px;top:-1px"><path d="M4.500 3v8M10.500 3l-4 4l4 4z" fill="#b3b1a1" stroke="#b3b1a1" stroke-width="1"/></svg></div>
<div class="abs" style="left:20px;top:834px;width:15px;height:14px;border:1px solid #d3d0c0;border-radius:3px;background:#efede2"><svg width="15" height="14" style="position:absolute;left:-1px;top:-1px"><path d="M9.500 3l-4 4l4 4z" fill="#b3b1a1" stroke="#b3b1a1" stroke-width="1"/></svg></div>
<div class="abs" style="left:37px;top:834px;width:15px;height:14px;border:1px solid #d3d0c0;border-radius:3px;background:#efede2"><svg width="15" height="14" style="position:absolute;left:-1px;top:-1px"><path d="M5.500 3l4 4l-4 4z" fill="#b3b1a1" stroke="#b3b1a1" stroke-width="1"/></svg></div>
<div class="abs" style="left:54px;top:834px;width:15px;height:14px;border:1px solid #d3d0c0;border-radius:3px;background:#efede2"><svg width="15" height="14" style="position:absolute;left:-1px;top:-1px"><path d="M10.500 3v8M4.500 3l4 4l-4 4z" fill="#b3b1a1" stroke="#b3b1a1" stroke-width="1"/></svg></div>
<svg class="abs" style="left:68px;top:830px" width="70" height="20"><path d="M2 2.500 L9 18.500 H52.500 L59 2.500" fill="#fff" stroke="#000" stroke-width="1"/><path d="M2.500 2.500 H58.500" stroke="#fff" stroke-width="1.500"/><text x="10.500" y="15" font-size="11" font-weight="bold" font-family="'Liberation Sans',sans-serif">Energy</text></svg>
<div class="abs" style="left:859px;top:833px;width:3px;height:16px;background:#fff;border-right:1px solid #777;border-left:1px solid #fff"></div>
<div class="abs" style="left:865px;top:832px;width:553px;height:18px;background:linear-gradient(to bottom,#e9e8e0,#f6f5f1 30%,#fefefb 60%,#fbfaf6)"></div>
<div class="abs" style="left:866px;top:834px;width:16px;height:14px;border:1px solid #fff;border-radius:3px;background:linear-gradient(135deg,#d3e1fd,#b9cdf8);box-shadow:inset 0 0 0 1px #b4c8f4,1px 1px 1px #c8cfe0"><svg width="15" height="14" style="position:absolute;left:-1px;top:-1px"><path d="M9.500 3.500 l-3.500 3.500 l3.500 3.500" fill="none" stroke="#4d6185" stroke-width="2"/></svg></div>
<div class="abs" style="left:1402px;top:834px;width:15px;height:14px;border:1px solid #fff;border-radius:3px;background:linear-gradient(135deg,#d3e1fd,#b9cdf8);box-shadow:inset 0 0 0 1px #b4c8f4,1px 1px 1px #c8cfe0"><svg width="15" height="14" style="position:absolute;left:-1px;top:-1px"><path d="M5.500 3.500 l3.500 3.500 l-3.500 3.500" fill="none" stroke="#4d6185" stroke-width="2"/></svg></div>
<div class="abs" style="left:883px;top:834px;width:242px;height:14px;border:1px solid #fff;border-radius:3px;background:linear-gradient(to bottom,#c9dbfd,#bdd2fb);box-shadow:inset 0 0 0 1px #a9bff0"><div class="abs" style="left:117px;top:3px;width:7px;height:6px;background:repeating-linear-gradient(to right,#8aa6e0 0 1px,#eef4fe 1px 2px)"></div></div>
<div class="abs" style="left:1418px;top:831px;width:3px;height:18px;background:#000"></div>
<div class="abs" style="left:1421px;top:832px;width:19px;height:19px;background:#ece9d8"></div>
<svg class="abs" style="left:0;top:0" width="1440" height="900" viewBox="0 0 1440 900"><rect x="723" y="99" width="7" height="3" fill="#000"/><rect x="724" y="99" width="5" height="2" fill="#22d822"/><rect x="1414" y="99" width="7" height="3" fill="#000"/><rect x="1415" y="99" width="5" height="2" fill="#22d822"/><rect x="35" y="460" width="4" height="7" fill="#000"/><rect x="35" y="461" width="3" height="5" fill="#22d822"/><rect x="1414" y="460" width="7" height="7" fill="#000"/><rect x="1415" y="461" width="5" height="5" fill="#22d822"/><rect x="35" y="825" width="4" height="7" fill="#000"/><rect x="35" y="826" width="3" height="5" fill="#22d822"/><rect x="723" y="825" width="7" height="7" fill="#000"/><rect x="724" y="826" width="5" height="5" fill="#22d822"/><rect x="1414" y="825" width="7" height="7" fill="#000"/><rect x="1415" y="826" width="5" height="5" fill="#22d822"/></svg>
<div class="abs" style="left:0;top:851px;width:1440px;height:20px;background:#ece9d8"></div>
<div class="abs" style="left:5px;top:853px;width:342px;height:16px;border:1px solid #aaa794;border-right-color:#d9d6c6;border-bottom-color:#d9d6c6;font-size:11px;line-height:16px;letter-spacing:-0.2px;padding:0 4px;text-align:left;white-space:nowrap;overflow:hidden"></div>
<div class="abs" style="left:352px;top:853px;width:367px;height:16px;border:1px solid #aaa794;border-right-color:#d9d6c6;border-bottom-color:#d9d6c6;font-size:11px;line-height:16px;letter-spacing:-0.2px;padding:0 4px;text-align:left;white-space:nowrap;overflow:hidden">PageStyle_Energy</div>
<div class="abs" style="left:724px;top:853px;width:49px;height:16px;border:1px solid #aaa794;border-right-color:#d9d6c6;border-bottom-color:#d9d6c6;font-size:11px;line-height:16px;letter-spacing:-0.2px;padding:0 4px;text-align:center;white-space:nowrap;overflow:hidden">100%</div>
<div class="abs" style="left:777px;top:853px;width:49px;height:16px;border:1px solid #aaa794;border-right-color:#d9d6c6;border-bottom-color:#d9d6c6;font-size:11px;line-height:16px;letter-spacing:-0.2px;padding:0 4px;text-align:left;white-space:nowrap;overflow:hidden"></div>
<div class="abs" style="left:831px;top:853px;width:43px;height:16px;border:1px solid #aaa794;border-right-color:#d9d6c6;border-bottom-color:#d9d6c6;font-size:11px;line-height:16px;letter-spacing:-0.2px;padding:0 4px;text-align:left;white-space:nowrap;overflow:hidden"></div>
<div class="abs" style="left:878px;top:853px;width:26px;height:16px;border:1px solid #aaa794;border-right-color:#d9d6c6;border-bottom-color:#d9d6c6;font-size:11px;line-height:16px;letter-spacing:-0.2px;padding:0 4px;text-align:center;white-space:nowrap;overflow:hidden">*</div>
<div class="abs" style="left:909px;top:853px;width:24px;height:16px;border:1px solid #aaa794;border-right-color:#d9d6c6;border-bottom-color:#d9d6c6;font-size:11px;line-height:16px;letter-spacing:-0.2px;padding:0 4px;text-align:left;white-space:nowrap;overflow:hidden"></div>
<div class="abs" style="left:938px;top:853px;width:497px;height:16px;border:1px solid #aaa794;border-right-color:#d9d6c6;border-bottom-color:#d9d6c6;font-size:11px;line-height:16px;letter-spacing:-0.2px;white-space:nowrap"><span class="abs" style="left:26px">0.00 / 0.70</span><span class="abs" style="left:273px">15.15 x 7.59</span><svg class="abs" style="left:6px;top:2px" width="16" height="12"><path d="M0 3.500h4M2.500 1v5" stroke="#223a8a"/><rect x="5.500" y="4.500" width="8" height="6" fill="none" stroke="#223a8a" stroke-dasharray="1 1"/></svg><svg class="abs" style="left:254px;top:1px" width="16" height="13"><rect x="4.500" y="3.500" width="8" height="8" fill="none" stroke="#222" stroke-dasharray="1 1"/><path d="M0 2l2 0M0 7l2 0M6 0l0 2M11 0 l0 2" stroke="#222"/></svg></div>
<div class="abs" style="left:0;top:870px;width:1440px;height:30px;background:linear-gradient(to bottom,#3168d5 0%,#4993e6 6%,#2b71e0 14%,#2663da 25%,#245ddb 60%,#2258d2 85%,#1941a5 100%)"></div>
<div class="abs" style="left:0;top:870px;width:97px;height:30px;border-radius:0 12px 12px 0;background:linear-gradient(to bottom,#388438 0%,#62b25e 8%,#3f9a3f 20%,#3a963a 60%,#2f8a30 85%,#226e24 100%);box-shadow:1px 0 3px #1a3a8a"></div>
<svg class="abs" style="left:10px;top:875px" width="22" height="20" viewBox="0 0 22 20"><path d="M2 4 q4 -3 8 -1 l-1.500 6 q-4 -2 -8 1z" fill="#e6452a"/><path d="M11 3.500 q4 2 8 -1 l-1.500 6 q-4 3 -8 1z" fill="#6cbf3a"/><path d="M0.500 11 q4 -3 8 -1 l-1.500 6 q-4 -2 -8 1z" fill="#3a78e0"/><path d="M9.500 10.500 q4 2 8 -1 l-1.500 6 q-4 3 -8 1z" fill="#f6c82a"/></svg>
<div class="abs" style="left:35px;top:872px;color:#fff;font-size:17.5px;font-weight:bold;font-style:italic;text-shadow:1px 1px 2px #1a4a1a;line-height:26px">start</div>
<svg class="abs" style="left:106px;top:874px" width="70" height="22" viewBox="0 0 70 22"><rect x="3.500" y="3.500" width="14" height="14" rx="3" fill="#e8f2ff" stroke="#2a6ad0"/><path d="M7 11 a4 4 0 1 1 4 4 M11 7 l3 -2" fill="none" stroke="#1a5ac0" stroke-width="1.800"/><circle cx="17" cy="6" r="1.500" fill="#e03a2a"/><ellipse cx="34" cy="11" rx="7" ry="6" fill="#c8d0dc" stroke="#3a4a6a"/><path d="M28 7 q4 -5 10 -2 q-3 2 -4 5z" fill="#3a7ad8"/><path d="M29 13 q5 3 9 -1" fill="none" stroke="#a0522a" stroke-width="2"/><path d="M49 8 v9 h13 v-8 h-6 l-1.500 -2 h-4z" fill="#f3d98a" stroke="#b08a30"/><circle cx="56" cy="10" r="3.500" fill="#dfeeff" stroke="#8898b8"/></svg>
<div class="abs" style="left:181px;top:871px;color:#fff;font-size:11px;letter-spacing:-1px;line-height:14px">&raquo;</div>
<div class="abs" style="left:199px;top:873px;width:108px;height:25px;border-radius:3px;background:linear-gradient(to bottom,#5c9af2 0%,#3c80ec 12%,#3a7ae8 50%,#3572e0 100%);box-shadow:inset 0 1px 0 #7ab0f8;color:#fff;font-size:11px;line-height:25px;white-space:nowrap;overflow:hidden"><svg class="abs" style="left:9px;top:4px" width="16" height="16" viewBox="0 0 16 16"><path d="M1 4 h5 l1.500 2 h7.500 v8 h-14z" fill="#f6d45a" stroke="#a8861a"/><path d="M1 7 h14" stroke="#fbe9a0"/></svg><span class="abs" style="left:28px;top:0"><b style="color:#f2c46a;margin-right:4px">4</b>Windo...</span><span class="abs" style="left:97px;top:0;font-size:7px">&#9660;</span></div>
<div class="abs" style="left:309px;top:873px;width:108px;height:25px;border-radius:3px;background:linear-gradient(to bottom,#5c9af2 0%,#3c80ec 12%,#3a7ae8 50%,#3572e0 100%);box-shadow:inset 0 1px 0 #7ab0f8;color:#fff;font-size:11px;line-height:25px;white-space:nowrap;overflow:hidden"><svg class="abs" style="left:9px;top:4px" width="16" height="16" viewBox="0 0 16 16"><circle cx="8" cy="8" r="7" fill="#3a6ad0"/><path d="M2 5 q3 -5 9 -3 q4 2 4 7 q-1 6 -7 6 q-6 0 -7 -6 q2 3 5 2 q-3 -2 -1 -5 q-2 0 -3 -1z" fill="#f08a1a" stroke="#b8500a" stroke-width=".600"/></svg><span class="abs" style="left:28px;top:0"><b style="color:#f2c46a;margin-right:4px">17</b>Firefox</span><span class="abs" style="left:97px;top:0;font-size:7px">&#9660;</span></div>
<div class="abs" style="left:419px;top:873px;width:108px;height:25px;border-radius:3px;background:linear-gradient(to bottom,#5c9af2 0%,#3c80ec 12%,#3a7ae8 50%,#3572e0 100%);box-shadow:inset 0 1px 0 #7ab0f8;color:#fff;font-size:11px;line-height:25px;white-space:nowrap;overflow:hidden"><svg class="abs" style="left:9px;top:4px" width="16" height="16" viewBox="0 0 16 16"><circle cx="8" cy="8" r="7.500" fill="#111"/><rect x="4" y="4" width="3.500" height="3.500" fill="#f6e23a"/><rect x="8.500" y="4" width="3.500" height="3.500" fill="#fff"/><rect x="4" y="8.500" width="3.500" height="3.500" fill="#fff"/><rect x="8.500" y="8.500" width="3.500" height="3.500" fill="#f6e23a"/></svg><span class="abs" style="left:28px;top:0">ViewNX - K...</span></div>
<div class="abs" style="left:529px;top:873px;width:108px;height:25px;border-radius:3px;background:linear-gradient(to bottom,#5c9af2 0%,#3c80ec 12%,#3a7ae8 50%,#3572e0 100%);box-shadow:inset 0 1px 0 #7ab0f8;color:#fff;font-size:11px;line-height:25px;white-space:nowrap;overflow:hidden"><svg class="abs" style="left:9px;top:4px" width="16" height="16" viewBox="0 0 16 16"><rect x="1.500" y="1.500" width="13" height="12" fill="#9aa8d8" stroke="#2a3a7a"/><rect x="4" y="4" width="8" height="6" fill="#1a2a5a"/><path d="M5 15 h6" stroke="#2a3a7a" stroke-width="1.500"/></svg><span class="abs" style="left:28px;top:0">IMatch - [I...</span></div>
<div class="abs" style="left:640px;top:873px;width:108px;height:25px;border-radius:3px;background:linear-gradient(to bottom,#5c9af2 0%,#3c80ec 12%,#3a7ae8 50%,#3572e0 100%);box-shadow:inset 0 1px 0 #7ab0f8;color:#fff;font-size:11px;line-height:25px;white-space:nowrap;overflow:hidden"><svg class="abs" style="left:9px;top:4px" width="16" height="16" viewBox="0 0 16 16"><rect x="2.500" y="6.500" width="12" height="9" fill="#f4f6d0" stroke="#6a7a20"/><rect x="4" y="8.500" width="4" height="2.500" fill="#9fcf30"/><rect x="9.500" y="8.500" width="4" height="2.500" fill="#9fcf30"/><rect x="4" y="12" width="4" height="2.500" fill="#9fcf30"/><rect x="9.500" y="12" width="4" height="2.500" fill="#9fcf30"/><path d="M2 5 l6 -4 l6 2 l-3 2 l-6 1z" fill="#f0f0f0" stroke="#666" stroke-width=".600"/></svg><span class="abs" style="left:28px;top:0">mikebaker_...</span></div>
<div class="abs" style="left:750px;top:873px;width:108px;height:25px;border-radius:3px;background:linear-gradient(to bottom,#5c9af2 0%,#3c80ec 12%,#3a7ae8 50%,#3572e0 100%);box-shadow:inset 0 1px 0 #7ab0f8;color:#fff;font-size:11px;line-height:25px;white-space:nowrap;overflow:hidden"><svg class="abs" style="left:9px;top:4px" width="16" height="16" viewBox="0 0 16 16"><rect x="2.500" y="6.500" width="12" height="9" fill="#f4f6d0" stroke="#6a7a20"/><rect x="4" y="8.500" width="4" height="2.500" fill="#9fcf30"/><rect x="9.500" y="8.500" width="4" height="2.500" fill="#9fcf30"/><rect x="4" y="12" width="4" height="2.500" fill="#9fcf30"/><rect x="9.500" y="12" width="4" height="2.500" fill="#9fcf30"/><path d="M2 5 l6 -4 l6 2 l-3 2 l-6 1z" fill="#f0f0f0" stroke="#666" stroke-width=".600"/></svg><span class="abs" style="left:28px;top:0">mikebaker_...</span></div>
<div class="abs" style="left:861px;top:873px;width:108px;height:25px;border-radius:3px;background:linear-gradient(to bottom,#1a48b0 0%,#1c4eba 40%,#1f55c4 100%);box-shadow:inset 1px 1px 1px #12348a;color:#fff;font-size:11px;line-height:25px;white-space:nowrap;overflow:hidden"><svg class="abs" style="left:9px;top:4px" width="16" height="16" viewBox="0 0 16 16"><rect x="2.500" y="6.500" width="12" height="9" fill="#f4f6d0" stroke="#6a7a20"/><rect x="4" y="8.500" width="4" height="2.500" fill="#9fcf30"/><rect x="9.500" y="8.500" width="4" height="2.500" fill="#9fcf30"/><rect x="4" y="12" width="4" height="2.500" fill="#9fcf30"/><rect x="9.500" y="12" width="4" height="2.500" fill="#9fcf30"/><path d="M2 5 l6 -4 l6 2 l-3 2 l-6 1z" fill="#f0f0f0" stroke="#666" stroke-width=".600"/></svg><span class="abs" style="left:28px;top:0">mikebaker_...</span></div>
<div class="abs" style="left:973px;top:873px;width:108px;height:25px;border-radius:3px;background:linear-gradient(to bottom,#5c9af2 0%,#3c80ec 12%,#3a7ae8 50%,#3572e0 100%);box-shadow:inset 0 1px 0 #7ab0f8;color:#fff;font-size:11px;line-height:25px;white-space:nowrap;overflow:hidden"><svg class="abs" style="left:9px;top:4px" width="16" height="16" viewBox="0 0 16 16"><rect x="1.500" y="1.500" width="13" height="13" fill="#eee" stroke="#444"/><path d="M2 2 l12 12 M14 2 l-12 12 M8 2 v12 M2 8 h12" stroke="#666" stroke-width=".700"/><path d="M5 12 l6 -7 l2 2 l-6 7z" fill="#2aaa2a"/></svg><span class="abs" style="left:28px;top:0">WebEdit</span></div>
<div class="abs" style="left:1083px;top:873px;width:108px;height:25px;border-radius:3px;background:linear-gradient(to bottom,#5c9af2 0%,#3c80ec 12%,#3a7ae8 50%,#3572e0 100%);box-shadow:inset 0 1px 0 #7ab0f8;color:#fff;font-size:11px;line-height:25px;white-space:nowrap;overflow:hidden"><svg class="abs" style="left:9px;top:4px" width="16" height="16" viewBox="0 0 16 16"><path d="M8 0 l2 3 l3.500 -1 l-.500 3.500 l3 2 l-3 2 l.500 3.500 l-3.500 -1 l-2 3 l-2 -3 l-3.500 1 l.500 -3.500 l-3 -2 l3 -2 l-.500 -3.500 l3.500 1z" fill="#f06a2a"/><ellipse cx="8" cy="8" rx="5" ry="3.200" fill="#fff"/><circle cx="8" cy="8" r="2.400" fill="#2a5ab8"/></svg><span class="abs" style="left:28px;top:0">Solar_Sep_...</span></div>
<div class="abs" style="left:1204px;top:879px;color:#a9c7f7;font-size:11px">Toolbars</div>
<div class="abs" style="left:1252px;top:871px;color:#fff;font-size:11px;letter-spacing:-1px;line-height:14px">&raquo;</div>
<div class="abs" style="left:1275px;top:870px;width:165px;height:30px;background:linear-gradient(to bottom,#1888e0 0%,#26a4f4 8%,#18a0f0 20%,#1496e8 55%,#1290e0 85%,#0e70b8 100%);border-left:1px solid #0e3a8a;box-shadow:inset 1px 0 0 #4ab8f8"></div>
<svg class="abs" style="left:1265px;top:874px" width="112" height="22" viewBox="0 0 112 22"><circle cx="10.500" cy="11" r="8.500" fill="#2f86ea" stroke="#dfeeff" stroke-width="1"/><path d="M12.500 6.500 l-4.500 4.500 l4.500 4.500" fill="none" stroke="#fff" stroke-width="2.200"/><circle cx="29" cy="11" r="8" fill="#3a8ae0" stroke="#1a4a98"/><path d="M23 9 l3 -2 l2 2 h5 l2 -2 v4 l-1 4 h-1.500 v-3 h-5 v3 h-1.500 l-1 -4z" fill="#111"/><circle cx="48" cy="11" r="7" fill="#555" stroke="#222"/><path d="M43 8 q5 -4 10 0 M42 12 q6 4 12 0" fill="none" stroke="#bbb" stroke-width="1.300"/><circle cx="65" cy="10" r="8" fill="#d8d8d8" stroke="#888"/><circle cx="65" cy="10" r="4" fill="#6a7ac8" stroke="#333"/><path d="M58 19.500 h14" stroke="#333" stroke-width="2"/><circle cx="83" cy="11" r="8" fill="#222"/><path d="M88 4 a8 8 0 0 1 -6 15 a9 9 0 0 0 6 -15z" fill="#f2e03a"/><circle cx="81" cy="10" r="4.500" fill="#1a90e8"/><rect x="95.500" y="10.500" width="10" height="8" rx="1" fill="#eee" stroke="#999"/><path d="M97.500 10.500 v-3 a3 3 0 0 1 6 0 v3" fill="none" stroke="#ddd" stroke-width="1.800"/></svg>
<div class="abs" style="left:1383px;top:879px;color:#fff;font-size:11px;letter-spacing:.2px">7:00 PM</div>
</body></html>
